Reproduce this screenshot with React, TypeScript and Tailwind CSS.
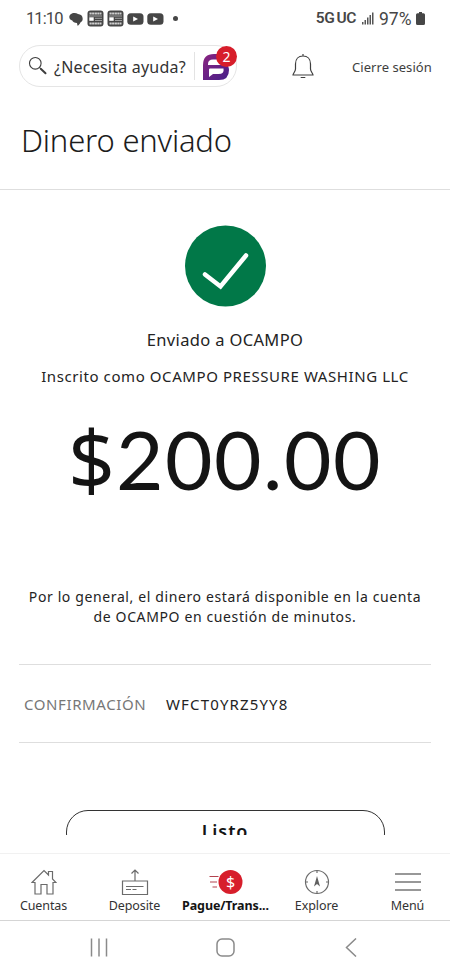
import React from 'react';

const noto = "font-['Noto_Sans',sans-serif]";

function Bubble() {
  return (
    <svg width="14" height="14" viewBox="0 0 14 14" fill="#464646">
      <path d="M5.500 1C2.400 1 .3 2.900.3 5c0 1.800 1.200 3 3 3.500C3.800 10 5.500 11 8 11l.5 2.800c1.500-1 2.400-2 2.900-3.400 1.500-.8 2.300-1.900 2.300-3.600 0-3-2-4.500-4.700-4.700C8 1.400 6.800 1 5.500 1Z" />
    </svg>
  );
}

function News() {
  return (
    <svg width="17" height="17" viewBox="0 0 17 17">
      <rect x=".5" y=".5" width="16" height="16" rx="3" fill="#464646" />
      <path d="M2.500 3.500h12M2.500 13.500h12" stroke="#d0d0d0" strokeWidth="2" strokeDasharray="2.200 .4" />
      <path d="M2 6h13M8 8.300h7M8 10.500h7" stroke="#b8b8b8" strokeWidth=".8" />
      <rect x="2.300" y="7.300" width="4.400" height="3.500" fill="#fff" />
    </svg>
  );
}

function Video() {
  return (
    <svg width="17" height="12" viewBox="0 0 17 12">
      <rect x=".3" y=".2" width="16.200" height="11.600" rx="3.500" fill="#464646" />
      <path d="M6.200 3.400v5.200L11 6Z" fill="#fff" />
    </svg>
  );
}

function StatusBar() {
  return (
    <div className="flex h-[37px] shrink-0 items-center justify-between pl-[26px] pr-[25px] font-['Roboto',sans-serif] text-[#464646]">
      <div className="flex items-center">
        <span className="mt-px w-[43px] whitespace-nowrap text-[16.500px] tracking-[-0.9px]">11:10</span>
        <Bubble />
        <div className="ml-[4px] flex items-center gap-[3px]">
          <News />
          <News />
          <Video />
          <Video />
        </div>
        <span className="ml-[9px] size-[5px] rounded-full bg-[#464646]" />
      </div>
      <div className="flex items-center">
        <span className="mt-px whitespace-nowrap text-[15.500px] font-semibold tracking-[-0.4px]">5G<span className="ml-[2px]">UC</span></span>
        <svg className="ml-[6px]" width="12" height="13" viewBox="0 0 12 13" fill="#555">
          <path d="M0 10h1.500v2.500H0ZM2.500 8H4v4.500H2.500ZM5 5.500h1.500v7H5ZM7.500 3H9v9.500H7.500ZM10 .5h1.500v12H10Z" />
        </svg>
        <span className="ml-[5px] mt-px w-[35px] whitespace-nowrap text-[17.500px]">97%</span>
        <svg className="ml-[2px]" width="9" height="13" viewBox="0 0 9 13" fill="#464646">
          <path d="M3 0h3v1.300h1.500Q9 1.300 9 2.800v8.700Q9 13 7.500 13h-6Q0 13 0 11.500V2.800Q0 1.300 1.500 1.300H3Z" />
        </svg>
      </div>
    </div>
  );
}

function Header() {
  return (
    <div className="flex h-[60px] shrink-0 items-start pl-[19px] pt-[8px]">
      <div className="relative flex h-[42px] w-[218px] items-center rounded-full border-[1.500px] border-[#e5e5e5]">
        <svg className="ml-[8px]" width="20" height="20" viewBox="0 0 20 20" fill="none" stroke="#3e3e3e">
          <circle cx="7.300" cy="7.300" r="5.800" strokeWidth="1.100" />
          <path d="m11.400 11.400 2 2" strokeWidth="1.100" />
          <path d="m13 13 4.500 4.300" strokeWidth="2" strokeLinecap="round" />
        </svg>
        <span className="ml-[6px] mt-[2px] w-[134px] whitespace-nowrap text-[16px] text-[#333] tracking-[0.22px]">¿Necesita ayuda?</span>
        <span className="ml-[6px] h-[28px] w-px bg-[#e3e3e3]" />
        <svg className="ml-[7px] mt-[1px]" width="28" height="28" viewBox="0 0 28 28">
          <defs>
            <linearGradient id="brand" x1="0" y1="0" x2="1" y2="1">
              <stop offset="0" stopColor="#8b2480" />
              <stop offset="1" stopColor="#46208a" />
            </linearGradient>
          </defs>
          <path d="M1 27V12Q1 1 12 1h12v10q3 2 3 6 0 10-10 10Z" fill="url(#brand)" />
          <path d="M6 12V11Q6 6.500 11 6.500h11V12Z" fill="#fff" />
          <path d="M8 15.500h13.500q1 5.500-5 5.500H11l-4 3v-7.500q0-1 1-1Z" fill="#fff" />
        </svg>
        <span className="absolute left-[196px] top-0 flex size-[21px] items-center justify-center rounded-full bg-[#d71e2b] text-[14px] text-white">2</span>
      </div>
      <svg className="ml-[55px] mt-[8px]" width="22" height="26" viewBox="0 0 22 26" fill="none" stroke="#3e3e3e" strokeWidth="1.200">
        <path d="M11 1v2M3.500 11C3.500 6 6.500 3 11 3s7.500 3 7.500 8v5c0 2.500 2.500 4.500 2.500 6H1c0-1.500 2.500-3.500 2.500-6ZM8.700 24.500h4.600" />
      </svg>
      <span className="ml-[38px] mt-[12px] whitespace-nowrap text-[13px] leading-[20px] text-[#3e3e3e] tracking-[0.05px]">Cierre sesión</span>
    </div>
  );
}

function Tab({ label, bold, children }: { label: string; bold?: boolean; children: React.ReactNode }) {
  return (
    <div className="flex w-[91px] shrink-0 flex-col items-center">
      <div className="flex h-[28px] items-center justify-center">{children}</div>
      <span className={`mt-[1px] whitespace-nowrap text-[12.500px] leading-[18px] ${bold ? 'font-bold text-[#141414] tracking-[-0.1px]' : 'text-[#333] tracking-[-0.1px]'}`}>{label}</span>
    </div>
  );
}

function TabBar() {
  return (
    <nav className="flex h-[68px] shrink-0 justify-center border-b border-t border-b-[#d5d5d5] border-t-[#f1f1f1] pl-px pt-[14px]">
      <Tab label="Cuentas">
        <svg width="26" height="26" viewBox="0 0 26 26" fill="none" stroke="#6b6b6b" strokeWidth="1.200">
          <path d="M1 13.500 13 1.500l4.500 4.500V2.500h4V10l3.500 3.500h-3V25h-6v-9.500h-6V25H4V13.500Z" />
        </svg>
      </Tab>
      <Tab label="Deposite">
        <svg width="28" height="28" viewBox="0 0 28 28" fill="none" stroke="#6b6b6b" strokeWidth="1.200">
          <path d="M1.500 13h25v13.500h-25ZM14 13V2M10.500 5.500 14 2l3.500 3.500" />
          <path d="M5 18.500h17.500M5 21.500h5M11.500 21.500h4" />
        </svg>
      </Tab>
      <Tab label="Pague/Trans..." bold>
        <svg width="34" height="26" viewBox="0 0 34 26">
          <path d="M.5 7.500h9M1 13h7M3.500 18H8" stroke="#b34450" strokeWidth="1.200" />
          <circle cx="21.500" cy="13" r="12" fill="#d71e2b" />
          <text x="21.500" y="18.500" textAnchor="middle" fontFamily="Noto Sans" fontSize="16" fill="#fff">$</text>
        </svg>
      </Tab>
      <Tab label="Explore">
        <svg width="26" height="26" viewBox="0 0 26 26" fill="none" stroke="#6b6b6b" strokeWidth="1.200">
          <circle cx="13" cy="13" r="11.500" />
          <path d="M13 1.500V4M13 22v2.500M1.500 13H4M22 13h2.500" />
          <path d="m13 7 3 10.500-3-2.500-3 2.500Z" fill="#606060" stroke="none" />
        </svg>
      </Tab>
      <Tab label="Menú">
        <svg width="26" height="18" viewBox="0 0 26 18" stroke="#777" strokeWidth="1.400">
          <path d="M0 1h26M0 9h26M0 17h26" />
        </svg>
      </Tab>
    </nav>
  );
}

function SystemNav() {
  return (
    <div className="flex h-[55px] shrink-0 pl-[90px] pt-[17px]">
      <svg width="18" height="19" viewBox="0 0 18 19" stroke="#8a8a8a" strokeWidth="1.500">
        <path d="M1.500 .5v18M9 .5v18M16.500 .5v18" />
      </svg>
      <svg className="ml-[108px]" width="19" height="19" viewBox="0 0 19 19" fill="none" stroke="#8a8a8a" strokeWidth="1.500">
        <rect x="1" y="1" width="17" height="17" rx="5" />
      </svg>
      <svg className="ml-[110px]" width="12" height="19" viewBox="0 0 12 19" fill="none" stroke="#8a8a8a" strokeWidth="1.500">
        <path d="m11 .5-9.500 9 9.500 9" />
      </svg>
    </div>
  );
}

export default function App() {
  return (
    <div className={`${noto} flex h-[976px] w-[450px] flex-col overflow-hidden bg-white text-[#232323]`}>
      <StatusBar />
      <Header />
      <div className="h-[93px] shrink-0 border-b-[1.500px] border-[#dedede] pl-[21px] pt-[21px]">
        <h1 className="whitespace-nowrap text-[31px] font-light leading-[44px] tracking-[-0.2px] text-[#1c1c1c]">Dinero enviado</h1>
      </div>
      <main className="flex h-[645px] shrink-0 flex-col items-center overflow-hidden pt-[35px]">
        <svg className="shrink-0" width="82" height="82" viewBox="0 0 82 82">
          <circle cx="41.500" cy="41" r="40.500" fill="#017848" />
          <path d="M21 49.500 36.500 61.500 62 30.500" fill="none" stroke="#fff" strokeWidth="4.500" strokeLinecap="round" />
        </svg>
        <p className="mt-[21px] whitespace-nowrap text-[16.500px] leading-[24px] tracking-[0.34px]">Enviado a OCAMPO</p>
        <p className="mt-[14px] whitespace-nowrap text-[15px] leading-[20px] tracking-[0.58px]">Inscrito como OCAMPO PRESSURE WASHING LLC</p>
        <p className="mt-[22px] flex h-[100px] items-baseline whitespace-nowrap font-['Lato','Noto_Sans',sans-serif] text-[82px] leading-[100px] tracking-[1.500px] text-[#141414]">
          <span className="w-[48px] font-['Noto_Sans',sans-serif]">$</span>
          <span>200.00</span>
        </p>
        <p className="mt-[79px] whitespace-nowrap text-center text-[14px] leading-[20px] tracking-[0.62px]">
          Por lo general, el dinero estará disponible en la cuenta<br />de OCAMPO en cuestión de minutos.
        </p>
        <div className="mt-[37px] flex h-[79px] w-[412px] shrink-0 items-center border-y-[1.500px] border-[#dedede] pl-[5px] pt-[2px] text-[15px]">
          <span className="w-[142px] whitespace-nowrap text-[#777] tracking-[0.6px]">CONFIRMACIÓN</span>
          <span className="whitespace-nowrap tracking-[1.150px]">WFCT0YRZ5YY8</span>
        </div>
        <div className="mt-[67px] h-[26px] w-[319px] shrink-0 overflow-hidden">
          <button className="flex h-[46px] w-full justify-center rounded-[22px] border-[1.500px] border-[#333] text-[18px] font-semibold leading-[41px] tracking-[0.9px] text-[#141414]">Listo</button>
        </div>
      </main>
      <div className="h-[18px] shrink-0" />
      <TabBar />
      <SystemNav />
    </div>
  );
}
